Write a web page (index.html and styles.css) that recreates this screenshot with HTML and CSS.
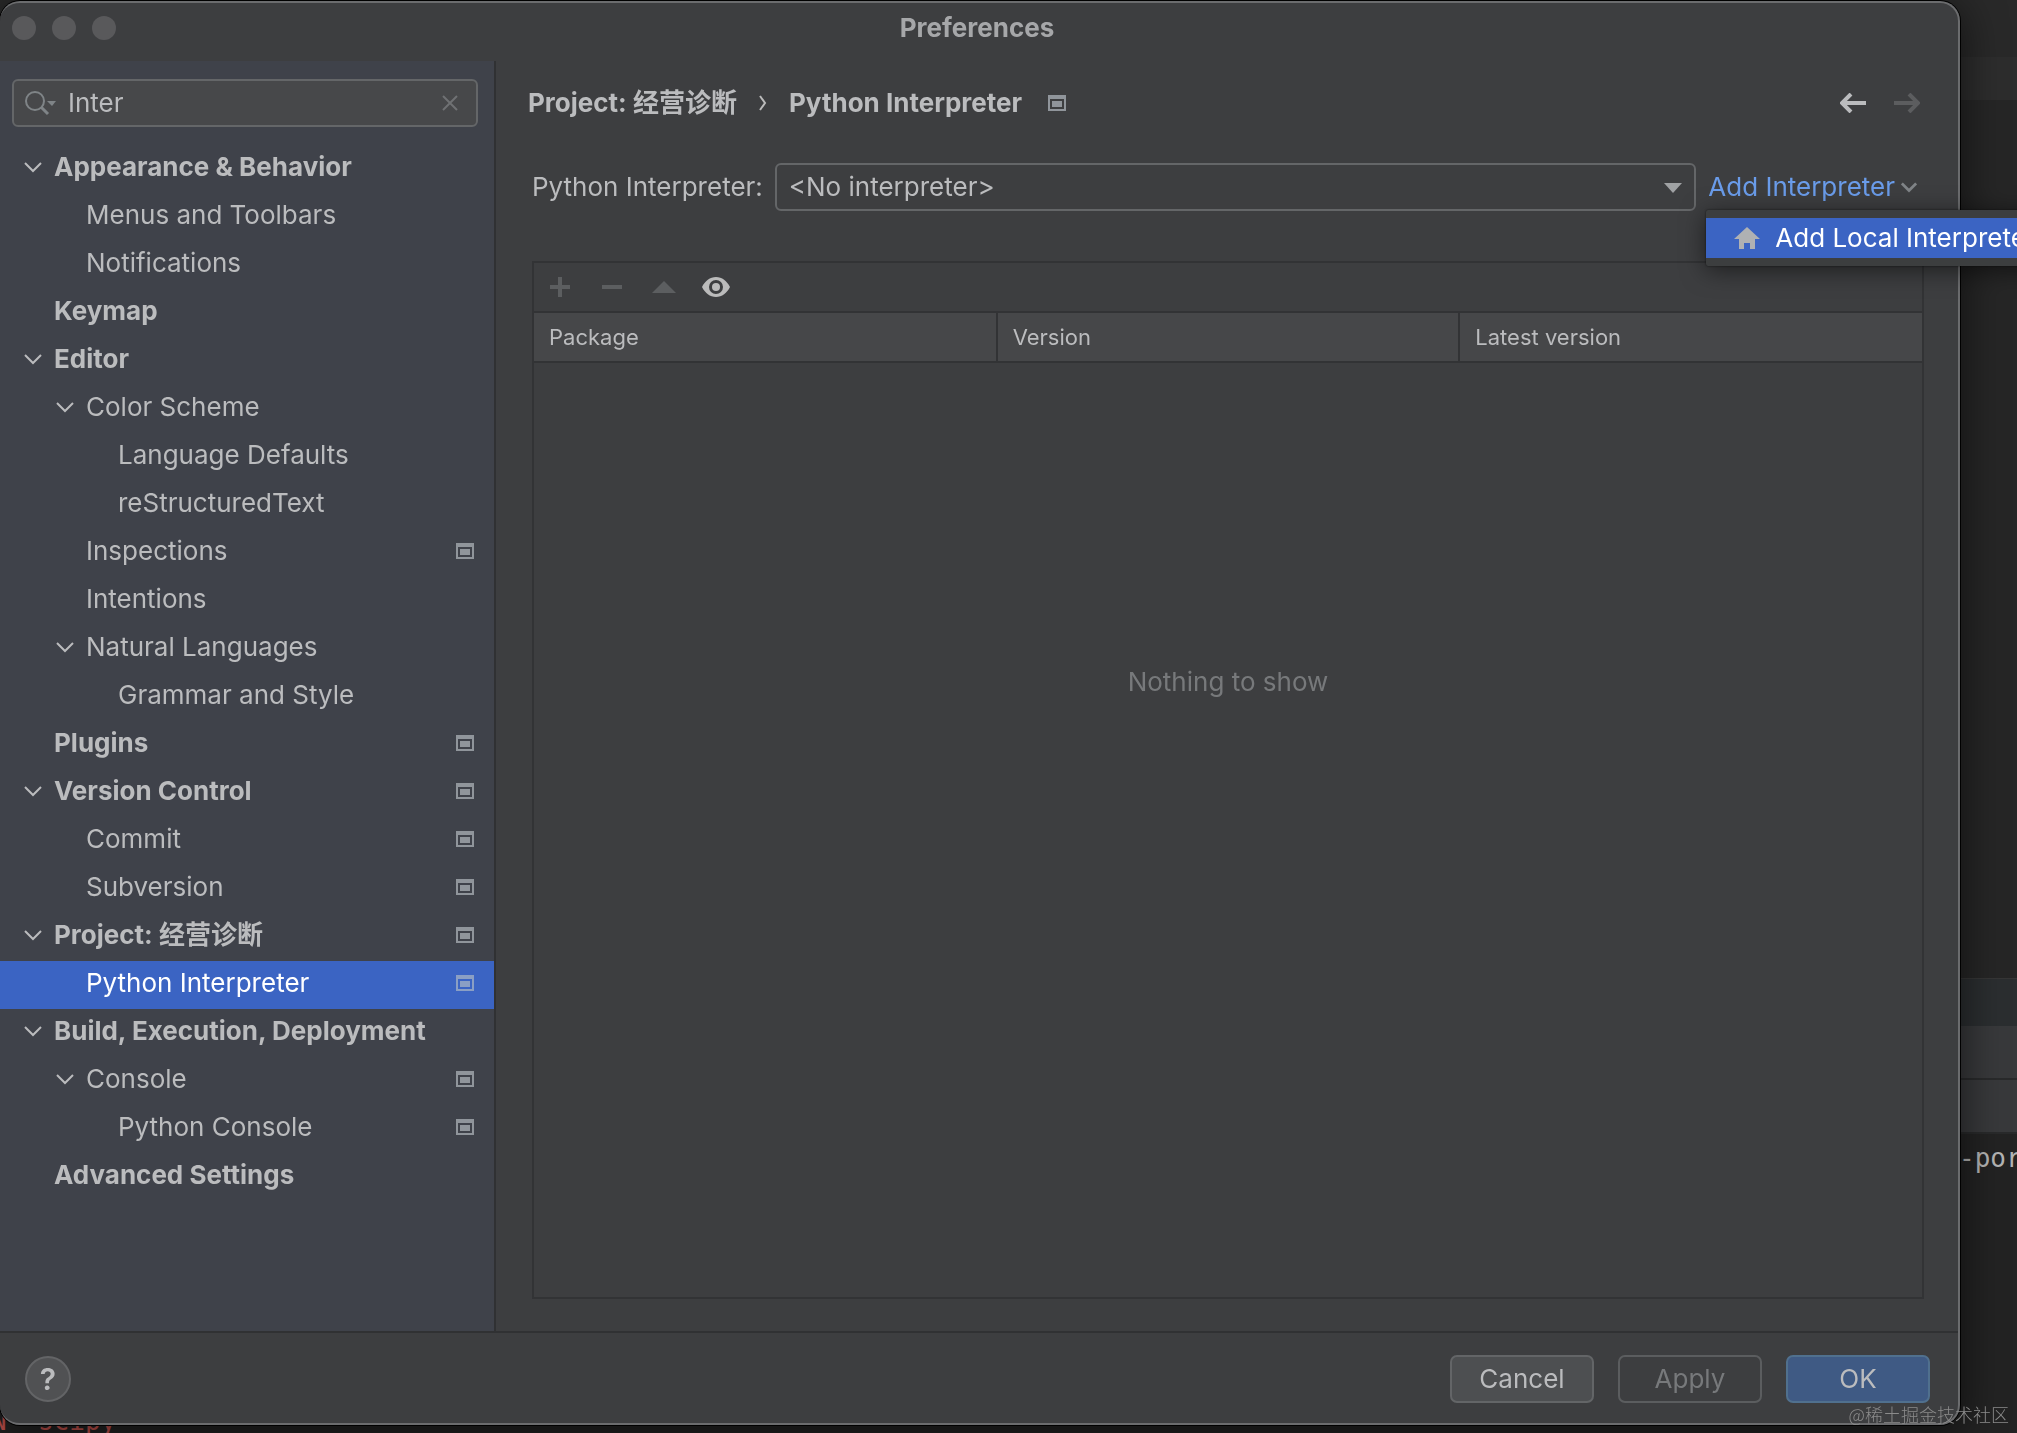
FILE: index.html
```html
<!DOCTYPE html>
<html lang="en">
<head>
  <meta charset="UTF-8">
  <title>Preferences</title>
  <link rel="stylesheet" href="styles.css">
</head>
<body>
  <svg class="sprite" aria-hidden="true">
    <symbol id="chevron" viewBox="0 0 18 18"><path d="M1 5l8 8 8-8" fill="none" stroke="currentColor" stroke-width="2"/></symbol>
    <symbol id="scope" viewBox="0 0 18 16"><path fill="currentColor" fill-rule="evenodd" d="M0 0h18v16H0zM2 4v10h14V4z"/><path fill="currentColor" d="M4 6h10v6H4z"/></symbol>
    <symbol id="arrow" viewBox="0 0 26 20"><path d="M26 10H3M11 1l-9 9 9 9" fill="none" stroke="currentColor" stroke-width="4"/></symbol>
  </svg>

  <!-- IDE window behind the dialog -->
  <div class="ide">
    <div class="ide-title"></div>
    <div class="ide-toolbar"></div>
    <div class="ide-editor"></div>
    <div class="ide-status"></div>
    <div class="ide-tabs"></div>
    <div class="ide-tabs"></div>
    <div class="terminal">
      <div class="command">-por</div>
      <div class="error">N&nbsp; scipy</div>
    </div>
  </div>

  <div class="dialog">
    <header class="titlebar">
      <div class="lights"><span></span><span></span><span></span></div>
      <h1>Preferences</h1>
    </header>

    <aside class="sidebar">
      <div class="search">
        <svg width="32" height="26" viewBox="0 0 32 26"><circle cx="11" cy="11" r="9" fill="none" stroke="#7f8487" stroke-width="2"/><path d="M17 17l7 7" stroke="#7f8487" stroke-width="3"/><path d="M23 11h9l-4 5z" fill="#7f8487"/></svg>
        <input type="text" value="Inter" aria-label="Search settings">
        <button class="clear" aria-label="Clear"><svg width="16" height="16" viewBox="0 0 16 16"><path d="M1 1l14 14M15 1L1 15" stroke="#6f7173" stroke-width="2"/></svg></button>
      </div>

      <nav class="tree">
        <a href="#" class="group"><svg class="chev"><use href="#chevron"/></svg>Appearance &amp; Behavior</a>
        <a href="#" class="level1">Menus and Toolbars</a>
        <a href="#" class="level1">Notifications</a>
        <a href="#" class="group leaf">Keymap</a>
        <a href="#" class="group"><svg class="chev"><use href="#chevron"/></svg>Editor</a>
        <a href="#" class="level1 open"><svg class="chev"><use href="#chevron"/></svg>Color Scheme</a>
        <a href="#" class="level2">Language Defaults</a>
        <a href="#" class="level2">reStructuredText</a>
        <a href="#" class="level1">Inspections<svg class="scope"><use href="#scope"/></svg></a>
        <a href="#" class="level1">Intentions</a>
        <a href="#" class="level1 open"><svg class="chev"><use href="#chevron"/></svg>Natural Languages</a>
        <a href="#" class="level2">Grammar and Style</a>
        <a href="#" class="group leaf">Plugins<svg class="scope"><use href="#scope"/></svg></a>
        <a href="#" class="group"><svg class="chev"><use href="#chevron"/></svg>Version Control<svg class="scope"><use href="#scope"/></svg></a>
        <a href="#" class="level1">Commit<svg class="scope"><use href="#scope"/></svg></a>
        <a href="#" class="level1">Subversion<svg class="scope"><use href="#scope"/></svg></a>
        <a href="#" class="group"><svg class="chev"><use href="#chevron"/></svg>Project: 经营诊断<svg class="scope"><use href="#scope"/></svg></a>
        <a href="#" class="level1 selected">Python Interpreter<svg class="scope"><use href="#scope"/></svg></a>
        <a href="#" class="group"><svg class="chev"><use href="#chevron"/></svg>Build, Execution, Deployment</a>
        <a href="#" class="level1 open"><svg class="chev"><use href="#chevron"/></svg>Console<svg class="scope"><use href="#scope"/></svg></a>
        <a href="#" class="level2">Python Console<svg class="scope"><use href="#scope"/></svg></a>
        <a href="#" class="group leaf">Advanced Settings</a>
      </nav>
    </aside>

    <main class="content">
      <div class="breadcrumb">
        <span>Project: 经营诊断</span>
        <svg width="8" height="16" viewBox="0 0 8 16"><path d="M1 1l5 7-5 7" fill="none" stroke="#bbb" stroke-width="2"/></svg>
        <span>Python Interpreter</span>
        <svg class="scope"><use href="#scope"/></svg>
        <div class="history">
          <button aria-label="Back"><svg width="26" height="20"><use href="#arrow"/></svg></button>
          <button aria-label="Forward" class="forward" disabled><svg width="26" height="20"><use href="#arrow"/></svg></button>
        </div>
      </div>

      <div class="interpreter">
        <label for="interpreter">Python Interpreter:</label>
        <div class="select">
          <select id="interpreter"><option>&lt;No interpreter&gt;</option></select>
          <svg width="18" height="10" viewBox="0 0 18 10"><path d="M0 0h18l-9 10z" fill="#a0a2a4"/></svg>
        </div>
        <div class="add">
          <button class="add-link">Add Interpreter <svg width="16" height="16" viewBox="0 0 18 18"><path d="M1 5l8 8 8-8" fill="none" stroke="#808487" stroke-width="3"/></svg></button>
          <div class="menu">
            <button><svg width="26" height="22" viewBox="0 0 26 22"><path d="M13 0l13 12h-5v10h-5v-6h-6v6H5V12H0z" fill="#afb1b3"/></svg>Add Local Interpreter...</button>
          </div>
        </div>
      </div>

      <section class="packages">
        <div class="toolbar">
          <button aria-label="Install" disabled><svg width="28" height="20" viewBox="0 0 28 20"><path d="M14 0v20M4 10h20" stroke="#5c5e60" stroke-width="4"/></svg></button>
          <button aria-label="Uninstall" disabled><svg width="28" height="20" viewBox="0 0 28 20"><path d="M4 10h20" stroke="#5c5e60" stroke-width="4"/></svg></button>
          <button aria-label="Upgrade" disabled><svg width="28" height="20" viewBox="0 0 28 20"><path d="M2 16L14 4l12 12z" fill="#5c5e60"/></svg></button>
          <button aria-label="Show early releases"><svg width="28" height="20" viewBox="0 0 28 20"><path fill="#bbb" fill-rule="evenodd" d="M14 0c6 0 11 4 14 10-3 6-8 10-14 10S3 16 0 10C3 4 8 0 14 0zm0 3a7 7 0 100 14 7 7 0 000-14z"/><circle cx="14" cy="10" r="4" fill="#bbb"/></svg></button>
        </div>
        <table>
          <thead>
            <tr><th>Package</th><th>Version</th><th>Latest version</th></tr>
          </thead>
          <tbody>
            <tr><td colspan="3">Nothing to show</td></tr>
          </tbody>
        </table>
      </section>
    </main>

    <footer class="footer">
      <button class="help">?</button>
      <button class="btn">Cancel</button>
      <button class="btn" disabled>Apply</button>
      <button class="btn primary">OK</button>
    </footer>
  </div>

  <div class="watermark">@稀土掘金技术社区</div>
</body>
</html>
```
FILE: styles.css
```css
* {
  box-sizing: border-box;
}

body {
  margin: 0;
  height: 100vh;
  overflow: hidden;
  background: #151515;
  color: #bbbcbe;
  font-family: Inter, "Noto Sans CJK SC", sans-serif;
  font-size: 26px;
  line-height: 32px;
}

button, input, select {
  font: inherit;
  color: inherit;
  background: none;
  border: 0;
  padding: 0;
  margin: 0;
}

a {
  color: inherit;
  text-decoration: none;
}

svg {
  flex: none;
  display: block;
}

.sprite {
  position: absolute;
  width: 0;
  height: 0;
}

/* background window */
.ide {
  position: fixed;
  inset: 0;
  display: flex;
  flex-direction: column;
  background: #262626;
}

.ide-title {
  height: 57px;
  background: #292929;
}

.ide-toolbar {
  height: 43px;
  background: #2d2d2d;
}

.ide-editor {
  flex: 1;
}

.ide-status {
  height: 48px;
  background: #2b2e30;
  border-top: 1px solid #363636;
}

.ide-tabs {
  height: 54px;
  background: #38393b;
  border-bottom: 2px solid #292a2b;
}

.terminal {
  height: 299px;
  display: flex;
  flex-direction: column;
  justify-content: space-between;
  padding-top: 8px;
  overflow: hidden;
  white-space: nowrap;
  font-family: "DejaVu Sans Mono", monospace;
  background: #232323;
}

.command {
  margin-left: calc(100% - 58px);
  color: #b4b4b4;
}

.error {
  margin-left: -9px;
  line-height: 24px;
  color: #c4524d;
}

/* dialog */
.dialog {
  position: relative;
  display: grid;
  grid-template-columns: 496px 1fr;
  grid-template-rows: 58px 1fr 92px;
  height: calc(100vh - 9px);
  margin: 1px 57px 8px 0;
  border: 2px solid #6b6c6e;
  border-left: 0;
  border-radius: 20px;
  background: #3d3e40;
  box-shadow: 0 0 0 1px #000, 0 8px 40px 4px #0008;
}

.titlebar {
  grid-column: 1 / -1;
  display: grid;
  grid-template-columns: 1fr auto 1fr;
  align-items: center;
  padding: 0 16px 8px 12px;
}

.titlebar h1 {
  margin: 0;
  font-size: 26px;
  color: #a6a7a9;
}

.lights {
  display: flex;
  gap: 16px;
}

.lights span {
  width: 24px;
  height: 24px;
  border-radius: 50%;
  background: #59595b;
}

.sidebar {
  padding-top: 18px;
  border-right: 2px solid #303133;
  background: #3f424a;
}

.search {
  display: flex;
  align-items: center;
  gap: 12px;
  height: 48px;
  margin: 0 16px 18px 12px;
  padding: 0 18px 0 10px;
  border: 2px solid #646668;
  border-radius: 6px;
  background: #47484a;
}

.search input {
  flex: 1;
  min-width: 0;
  outline: 0;
}

.tree a {
  display: flex;
  align-items: center;
  height: 48px;
  padding: 0 20px 4px 24px;
  white-space: nowrap;
}

.tree .group {
  font-weight: bold;
}

.tree .leaf {
  padding-left: 54px;
}

.tree .level1 {
  padding-left: 86px;
}

.tree .open {
  padding-left: 56px;
}

.tree .level2 {
  padding-left: 118px;
}

.tree .selected {
  background: #3b64c3;
  color: #fff;
}

.chev {
  width: 18px;
  height: 18px;
  margin-right: 12px;
}

.scope {
  width: 18px;
  height: 16px;
  color: #90959b;
}

.tree .scope {
  margin-left: auto;
}

.selected .scope {
  color: #8a9fc4;
}

.content {
  display: flex;
  flex-direction: column;
  padding: 18px 34px 32px 36px;
}

.breadcrumb {
  display: flex;
  align-items: center;
  gap: 22px;
  height: 48px;
  margin-left: -4px;
  font-weight: bold;
}

.breadcrumb .scope {
  margin-left: 4px;
}

.history {
  display: flex;
  gap: 28px;
  margin-left: auto;
  padding-right: 4px;
}

.forward {
  color: #5c5d5f;
  transform: scaleX(-1);
}

.interpreter {
  display: flex;
  align-items: center;
  margin: 36px 0 50px;
}

.select {
  position: relative;
  flex: 1;
  margin: 0 12px;
}

.select select {
  width: 100%;
  height: 48px;
  padding: 0 48px 0 12px;
  border: 2px solid #646668;
  border-radius: 6px;
  appearance: none;
}

.select svg {
  position: absolute;
  top: 20px;
  right: 14px;
  pointer-events: none;
}

.add {
  position: relative;
}

.add-link {
  display: flex;
  align-items: center;
  gap: 6px;
  height: 48px;
  padding-right: 7px;
  color: #6a9cea;
}

.menu {
  position: absolute;
  top: 47px;
  left: -2px;
  z-index: 1;
  padding: 8px 0;
  border-radius: 2px;
  background: #3c3e3f;
  box-shadow: 0 4px 24px #0008, 0 0 2px #000a;
}

.menu button {
  display: flex;
  align-items: center;
  gap: 15px;
  height: 40px;
  padding: 0 28px;
  background: #3b64c3;
  color: #fff;
  white-space: nowrap;
}

.packages {
  flex: 1;
  display: flex;
  flex-direction: column;
  border: 2px solid #323335;
}

.toolbar {
  display: flex;
  align-items: center;
  gap: 24px;
  height: 48px;
  padding: 0 12px;
}

table {
  width: 100%;
  table-layout: fixed;
  border-collapse: collapse;
}

th {
  height: 50px;
  padding: 0 15px;
  border: solid #323335;
  border-width: 2px 0;
  background: #464749;
  font-size: 22px;
  font-weight: normal;
  text-align: left;
}

th + th {
  border-left-width: 2px;
}

td {
  padding: 303px 0 0;
  text-align: center;
  color: #77797b;
}

.footer {
  grid-column: 1 / -1;
  display: flex;
  align-items: center;
  gap: 24px;
  padding: 2px 28px 0 25px;
  border-top: 2px solid #303133;
}

.help {
  width: 46px;
  height: 46px;
  margin-right: auto;
  border: 2px solid #636466;
  border-radius: 50%;
  background: #505153;
  font-size: 30px;
  font-weight: 600;
}

.btn {
  width: 144px;
  height: 48px;
  border: 2px solid #636567;
  border-radius: 7px;
  background: #4d4f51;
}

.btn:disabled {
  border-color: #5b5d5f;
  background: none;
  color: #77797b;
}

.primary {
  border-color: #50708e;
  background: #3f5a84;
}

.watermark {
  position: fixed;
  right: 8px;
  bottom: 7px;
  font-family: "Noto Sans CJK SC", sans-serif;
  font-size: 18px;
  font-weight: 300;
  line-height: 24px;
  color: #8b8b8b;
}
```
